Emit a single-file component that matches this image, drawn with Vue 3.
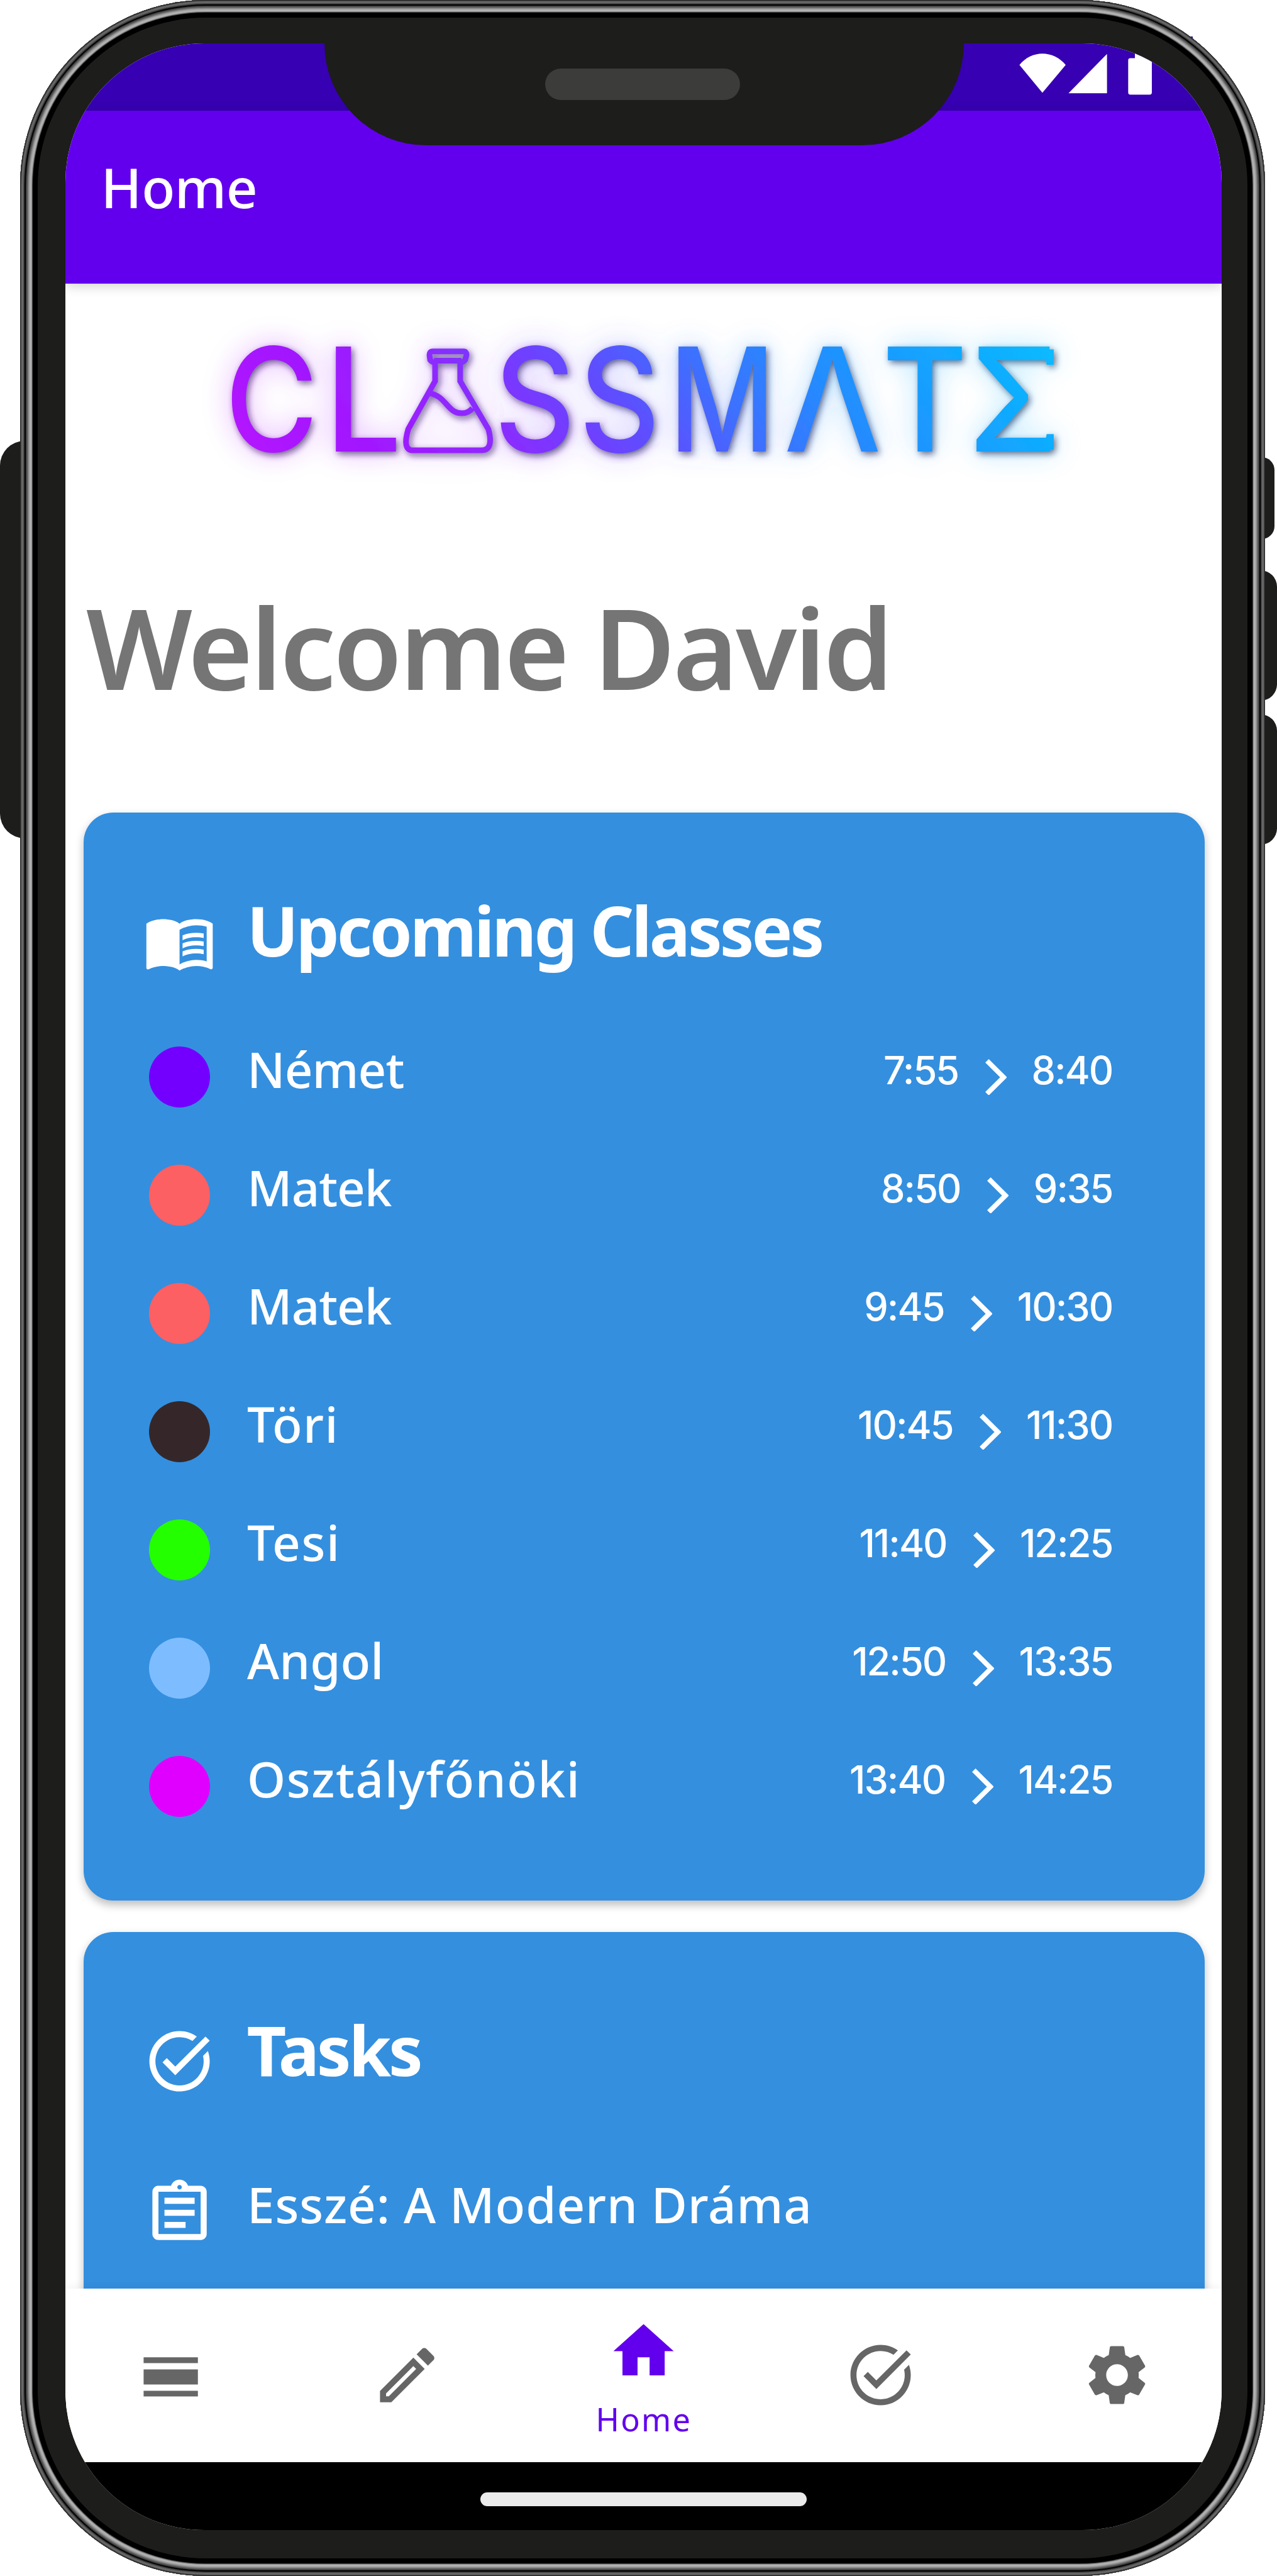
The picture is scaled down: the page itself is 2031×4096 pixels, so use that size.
<script setup>
const classes = [
  { name: 'Német', color: '#7300ff', from: '7:55', to: '8:40', tracking: -0.012 },
  { name: 'Matek', color: '#fc6062', from: '8:50', to: '9:35', tracking: -0.014 },
  { name: 'Matek', color: '#fc6062', from: '9:45', to: '10:30', tracking: -0.014 },
  { name: 'Töri', color: '#352729', from: '10:45', to: '11:30', tracking: 0.018 },
  { name: 'Tesi', color: '#24ff00', from: '11:40', to: '12:25', tracking: 0.02 },
  { name: 'Angol', color: '#7dbdff', from: '12:50', to: '13:35', tracking: 0 },
  { name: 'Osztályfőnöki', color: '#e000ff', from: '13:40', to: '14:25', tracking: 0.02 },
]

const logoLetters = [
  { c: 'C', x: 638, w: 264 },
  { c: 'L', x: 921, w: 218 },
  { c: 'S', x: 1401, w: 229 },
  { c: 'S', x: 1641, w: 229 },
  { c: 'M', x: 1896, w: 300 },
  { c: 'Λ', x: 2221, w: 276 },
  { c: 'T', x: 2499, w: 242 },
  { c: 'Σ', x: 2744, w: 254 },
]

const taskIcon =
  'M22,5.18L10.59,16.6l-4.24-4.24l1.41-1.41l2.83,2.83l10-10L22,5.18z M19.79,10.22C19.92,10.79,20,11.39,20,12c0,4.42-3.58,8-8,8s-8-3.58-8-8c0-4.42,3.58-8,8-8c1.58,0,3.04,0.46,4.28,1.25l1.44-1.44C16.1,2.67,14.13,2,12,2C6.48,2,2,6.48,2,12c0,5.52,4.48,10,10,10s10-4.48,10-10c0-1.19-0.22-2.33-0.6-3.39L19.79,10.22z'

const navItems = [
  { id: 'timetable', path: 'M3 6.1h18v1.9H3zM3 10.1h18v5H3zM3 17.2h18v1.9H3z' },
  {
    id: 'edit',
    path: 'M14.06 9.02l.92.92L5.92 19H5v-.92l9.06-9.06M17.66 3c-.25 0-.51.1-.7.29l-1.83 1.83 3.75 3.75 1.83-1.83c.39-.39.39-1.02 0-1.41l-2.34-2.34c-.2-.2-.45-.29-.71-.29zm-3.6 3.19L3 17.25V21h3.75L17.81 9.94l-3.75-3.75z',
  },
  { id: 'home', label: 'Home', path: 'M10 20v-6h4v6h5v-8h3L12 3 2 12h3v8z' },
  { id: 'tasks', path: taskIcon },
  {
    id: 'settings',
    path: 'M19.14,12.94c0.04-0.3,0.06-0.61,0.06-0.94c0-0.32-0.02-0.64-0.07-0.94l2.03-1.58c0.18-0.14,0.23-0.41,0.12-0.61l-1.92-3.32c-0.12-0.22-0.37-0.29-0.59-0.22l-2.39,0.96c-0.5-0.38-1.03-0.7-1.62-0.94L14.4,2.81c-0.04-0.24-0.24-0.41-0.48-0.41h-3.84c-0.24,0-0.43,0.17-0.47,0.41L9.25,5.35C8.66,5.59,8.12,5.92,7.63,6.29L5.24,5.33c-0.22-0.08-0.47,0-0.59,0.22L2.74,8.87C2.62,9.08,2.66,9.34,2.86,9.48l2.03,1.58C4.84,11.36,4.8,11.69,4.8,12s0.02,0.64,0.07,0.94l-2.03,1.58c-0.18,0.14-0.23,0.41-0.12,0.61l1.92,3.32c0.12,0.22,0.37,0.29,0.59,0.22l2.39-0.96c0.5,0.38,1.03,0.7,1.62,0.94l0.36,2.54c0.05,0.24,0.24,0.41,0.48,0.41h3.84c0.24,0,0.44-0.17,0.47-0.41l0.36-2.54c0.59-0.24,1.13-0.56,1.62-0.94l2.39,0.96c0.22,0.08,0.47,0,0.59-0.22l1.92-3.32c0.12-0.22,0.07-0.47-0.12-0.61L19.14,12.94z M12,15.6c-1.98,0-3.6-1.62-3.6-3.6s1.62-3.6,3.6-3.6s3.6,1.62,3.6,3.6S13.98,15.6,12,15.6z',
  },
]
</script>

<template>
  <div class="stage">
    <i class="key key-left"></i>
    <i class="key key-a"></i>
    <i class="key key-b"></i>
    <i class="key key-c"></i>
    <i class="corner"></i>

    <div class="phone">
      <div class="screen">
        <div class="status">
          <svg class="status-icons" viewBox="2880 122 400 192">
            <path d="M2951 262 2886 183C2920 140 2982 140 3017 183Z" />
            <path d="M3134 152V263H3025Z" />
            <path d="M3213 140h30v24h12q6 0 6 6v91q0 6-6 6h-55q-6 0-6-6v-91q0-6 6-6h13z" />
          </svg>
        </div>
        <header class="appbar">Home</header>

        <main class="content">
          <svg class="logo" viewBox="186 804 3274 640">
            <defs>
              <linearGradient id="brand" gradientUnits="userSpaceOnUse" x1="656" y1="1280" x2="2224" y2="26">
                <stop offset="0" stop-color="#b615ff" />
                <stop offset=".1" stop-color="#a714ff" />
                <stop offset=".2" stop-color="#9d1cff" />
                <stop offset=".29" stop-color="#9028ff" />
                <stop offset=".38" stop-color="#763aff" />
                <stop offset=".48" stop-color="#5c50ff" />
                <stop offset=".59" stop-color="#3d70ff" />
                <stop offset=".72" stop-color="#228eff" />
                <stop offset=".86" stop-color="#13a5ff" />
                <stop offset="1" stop-color="#08bbff" />
              </linearGradient>
              <filter id="glow" filterUnits="userSpaceOnUse" x="186" y="804" width="3274" height="640">
                <feGaussianBlur in="SourceGraphic" stdDeviation="42" result="halo" />
                <feComponentTransfer in="halo" result="softHalo">
                  <feFuncA type="linear" slope=".34" />
                </feComponentTransfer>
                <feOffset in="SourceAlpha" dx="6" dy="8" />
                <feGaussianBlur stdDeviation="9" result="drop" />
                <feFlood flood-color="#1a1446" flood-opacity=".68" />
                <feComposite in2="drop" operator="in" result="shade" />
                <feMerge>
                  <feMergeNode in="softHalo" />
                  <feMergeNode in="shade" />
                  <feMergeNode in="SourceGraphic" />
                </feMerge>
              </filter>
            </defs>
            <g filter="url(#glow)" fill="url(#brand)">
              <text
                v-for="(l, i) in logoLetters"
                :key="i"
                class="logo-letter"
                :x="l.x"
                y="1280"
                :textLength="l.w"
                lengthAdjust="spacingAndGlyphs"
              >{{ l.c }}</text>
              <path d="M2957 990h28v44h-20zM2957 1274h28v-44h-20z" />
              <path
                class="flask"
                d="M1226 996h88q8 0 8 10l-4 14q-4 6-14 8v52l80 136q16 60-20 60H1171q-32 0-14-60l76-136v-52q-10-2-14-8l-2-14q0-10 9-10zM1230 1022h78M1216 1114c50 8 50 57 93 57q18 0 30-14"
              />
            </g>
          </svg>

          <h1 class="welcome">Welcome David</h1>

          <section class="card">
            <div class="card-head">
              <svg class="icon" viewBox="0 0 24 24">
                <path
                  fill-rule="evenodd"
                  d="M21 5c-1.110-.35-2.330-.5-3.500-.5-1.950 0-4.050.4-5.500 1.500-1.450-1.100-3.550-1.500-5.500-1.500S2.450 4.900 1 6v14.650c0 .25.25.5.5.5.1 0 .15-.05.25-.05C3.100 20.450 5.050 20 6.500 20c1.950 0 4.050.4 5.500 1.500 1.350-.85 3.800-1.500 5.500-1.500 1.650 0 3.350.3 4.750 1.050.1.05.15.05.25.05.25 0 .5-.25.5-.5V6c-.6-.45-1.250-.75-2-1zm0 13.500c-1.100-.35-2.300-.5-3.500-.5-1.700 0-4.150.65-5.500 1.500V8c1.350-.85 3.800-1.500 5.500-1.500 1.200 0 2.400.15 3.500.5v11.500z"
                />
                <path
                  d="M17.500 10.500c.88 0 1.730.09 2.500.26V9.240c-.79-.15-1.640-.24-2.500-.24-1.700 0-3.240.29-4.500.83v1.660c1.130-.64 2.700-.99 4.500-.99zM13 12.490v1.660c1.130-.64 2.700-.99 4.500-.99.88 0 1.730.09 2.500.26V11.900c-.79-.15-1.640-.24-2.500-.24-1.700 0-3.240.3-4.500.83zM17.500 14.330c-1.700 0-3.240.29-4.500.83v1.660c1.130-.64 2.700-.99 4.500-.99.88 0 1.730.09 2.500.26v-1.520c-.79-.16-1.640-.24-2.500-.24z"
                />
              </svg>
              <h2>Upcoming Classes</h2>
            </div>
            <ul class="rows">
              <li v-for="(c, i) in classes" :key="i" class="row">
                <span class="dot-box"><i class="dot" :style="{ background: c.color }"></i></span>
                <span class="name" :style="{ letterSpacing: c.tracking + 'em' }">{{ c.name }}</span>
                <span class="time">{{ c.from }}</span>
                <svg class="chevron" viewBox="0 0 60 103"><path d="M5 5l47 46.500L5 98" /></svg>
                <span class="time">{{ c.to }}</span>
              </li>
            </ul>
          </section>

          <section class="card tasks">
            <div class="card-head">
              <svg class="icon" viewBox="0 0 24 24"><path :d="taskIcon" /></svg>
              <h2>Tasks</h2>
            </div>
            <ul class="rows">
              <li class="row">
                <svg class="icon" viewBox="0 0 24 24">
                  <path
                    d="M7 15h7v2H7zm0-4h10v2H7zm0-4h10v2H7zm12-4h-4.180C14.400 1.840 13.300 1 12 1c-1.300 0-2.400.84-2.820 2H5c-.14 0-.27.01-.4.04-.39.08-.74.28-1.010.55-.18.18-.33.4-.43.64-.1.23-.16.49-.16.77v14c0 .27.06.54.16.78s.25.45.43.64c.27.27.62.47 1.010.55.13.02.26.03.4.03h14c1.100 0 2-.9 2-2V5c0-1.100-.9-2-2-2zm-7-.25c.41 0 .75.34.75.75s-.34.75-.75.75-.75-.34-.75-.75.34-.75.75-.75zM19 19H5V5h14v14z"
                  />
                </svg>
                <span class="name">Esszé: A Modern Dráma</span>
              </li>
            </ul>
          </section>
        </main>

        <nav class="nav">
          <a v-for="n in navItems" :key="n.id" class="nav-item" :class="{ active: n.label }">
            <svg class="icon" viewBox="0 0 24 24"><path :d="n.path" /></svg>
            <span v-if="n.label" class="nav-label">{{ n.label }}</span>
          </a>
        </nav>
        <div class="system"><i class="pill"></i></div>

        <div class="notch"><i class="speaker"></i></div>
      </div>
    </div>
  </div>
</template>

<style>
html {
  font-size: 56.16px;
}
body {
  margin: 0;
  background: #fff;
}
</style>

<style scoped>
.stage {
  position: relative;
  box-sizing: border-box;
  width: 2031px;
  height: 4096px;
  padding: 0 0.33rem 0 0.57rem;
  overflow: hidden;
  background: #fff;
  font-family: 'Noto Sans', 'Open Sans', sans-serif;
}
.key {
  position: absolute;
  background: #1d1d1b;
}
.key-left { left: 0; top: 12.48rem; width: 2rem; height: 11.26rem; border-radius: 0.7rem; }
.key-a { right: 0.08rem; top: 12.94rem; width: 2rem; height: 2.32rem; border-radius: 0.36rem; }
.key-b { right: 0; top: 16.15rem; width: 2rem; height: 3.69rem; border-radius: 0.46rem; }
.key-c { right: 0; top: 20.22rem; width: 2rem; height: 3.69rem; border-radius: 0.46rem; }
.corner {
  position: absolute;
  left: 33.4rem;
  top: 1.03rem;
  width: 0.38rem;
  height: 0.3rem;
  background: #3700b3;
}
.phone {
  position: relative;
  box-sizing: border-box;
  height: 100%;
  padding: 1.22rem 1.23rem 1.3rem 1.29rem;
  border-radius: 5.26rem;
  background: #1d1d1b;
  box-shadow:
    inset 0 0 0 1px #262626,
    inset 0 0 0 2px #474747,
    inset 0 0 0 3px #626262,
    inset 0 0 0 4px #6b6b6b,
    inset 0 0 0 5px #626262,
    inset 0 0 0 6px #4c4c4c,
    inset 0 0 0 7px #353535,
    inset 0 0 0 9px #040404,
    inset 0 0 0 10px #393939,
    inset 0 0 0 11px #4d4d4d,
    inset 0 0 0 12px #5e5e5e,
    inset 0 0 0 13px #757575,
    inset 0 0 0 14px #8b8b8b,
    inset 0 0 0 15px #9e9e9e,
    inset 0 0 0 16px #acacac,
    inset 0 0 0 18px #b2b2b2,
    inset 0 0 0 19px #8e8e8e,
    inset 0 0 0 20px #4a4a4a,
    inset 0 0 0 28px #000;
}
.screen {
  position: relative;
  display: flex;
  flex-direction: column;
  height: 100%;
  overflow: hidden;
  border-radius: 3.94rem;
  background: #fff;
}
.status {
  display: flex;
  justify-content: flex-end;
  flex: 0 0 1.92rem;
  padding-right: 1.8rem;
  background: #3700b3;
}
.status-icons {
  width: 4rem;
  height: 1.92rem;
  fill: #fff;
}
.appbar {
  position: relative;
  z-index: 1;
  box-sizing: border-box;
  flex: 0 0 4.9rem;
  padding: 1.39rem 0 0 1rem;
  background: #6200ee;
  box-shadow: 0 0.05rem 0.35rem rgba(0, 0, 0, 0.2);
  color: #fff;
  font-size: 1.55rem;
  font-weight: 500;
  letter-spacing: -0.006em;
  line-height: 1;
}
.content {
  flex: 1 1 0;
  min-height: 0;
  overflow: hidden;
}
.logo {
  display: block;
  width: 32.74rem;
  height: 6.4rem;
}
.logo-letter {
  font-family: Inter, sans-serif;
  font-size: 408px;
  font-weight: 450;
}
.flask {
  fill: none;
  stroke: url(#brand);
  stroke-width: 16;
}
.welcome {
  margin: 2.3rem 0 0 0.58rem;
  color: #757575;
  font-size: 3.16rem;
  font-weight: 600;
  letter-spacing: -0.022em;
  line-height: 1;
  white-space: nowrap;
}
.card {
  box-sizing: border-box;
  margin: 3.11rem 0.48rem 0 0.5rem;
  padding: 2.37rem 2.62rem 1.55rem 1.7rem;
  border-radius: 0.84rem;
  background: #348fdf;
  box-shadow: 0 0.12rem 0.24rem rgba(0, 0, 0, 0.26);
  color: #fff;
}
.card.tasks {
  height: 14rem;
  margin-top: 0.9rem;
}
.card-head {
  display: flex;
  gap: 0.88rem;
  height: 2.31rem;
}
.card-head .icon {
  margin-top: 0.26rem;
}
.icon {
  flex: none;
  width: 2.05rem;
  height: 2.05rem;
  fill: currentColor;
}
h2 {
  margin: 0;
  font-size: 1.94rem;
  font-weight: 700;
  letter-spacing: -0.037em;
  line-height: 1;
}
.rows {
  margin: 1.13rem 0 0;
  padding: 0;
  list-style: none;
}
.tasks .rows {
  margin-top: 1.59rem;
}
.row {
  display: flex;
  align-items: center;
  height: 3.348rem;
}
.dot-box {
  display: flex;
  justify-content: center;
  width: 2.05rem;
}
.dot {
  width: 1.73rem;
  height: 1.73rem;
  border-radius: 50%;
}
.name {
  flex: 1;
  padding: 0 0 0.46rem 0.89rem;
  font-size: 1.39rem;
  font-weight: 500;
  letter-spacing: 0.011em;
  line-height: 1;
}
.time {
  padding-bottom: 0.34rem;
  font-family: Inter, sans-serif;
  font-size: 1.09rem;
  font-weight: 500;
  letter-spacing: -0.032em;
  line-height: 1;
}
.chevron {
  width: 0.6rem;
  height: 1.03rem;
  margin: 0 0.71rem 0 0.76rem;
  fill: none;
  stroke: #fff;
  stroke-width: 14;
}
.nav {
  position: relative;
  display: flex;
  justify-content: center;
  flex: 0 0 4.92rem;
  background: #fff;
  box-shadow: 0 0 0.3rem rgba(0, 0, 0, 0.07);
}
.nav-item {
  display: flex;
  flex: 0 0 6.7rem;
  flex-direction: column;
  align-items: center;
  justify-content: center;
  color: #666;
}
.nav-item.active {
  color: #6200ee;
}
.nav-label {
  margin-top: 0.46rem;
  font-size: 0.9rem;
  letter-spacing: 0.045em;
  line-height: 1;
}
.system {
  display: flex;
  justify-content: center;
  flex: 0 0 1.92rem;
  background: #000;
}
.pill {
  width: 9.24rem;
  height: 0.4rem;
  margin-top: 0.85rem;
  border-radius: 0.2rem;
  background: #ebebeb;
}
.notch {
  position: absolute;
  z-index: 2;
  top: -1px;
  left: 7.32rem;
  display: flex;
  justify-content: center;
  width: 18.11rem;
  height: 2.92rem;
  border-radius: 0 0 2.88rem 2.88rem;
  background: #1d1d1b;
}
.speaker {
  width: 5.52rem;
  height: 0.89rem;
  margin: 0.74rem 0.06rem 0 0;
  border-radius: 0.45rem;
  background: #3c3c3b;
}
</style>
